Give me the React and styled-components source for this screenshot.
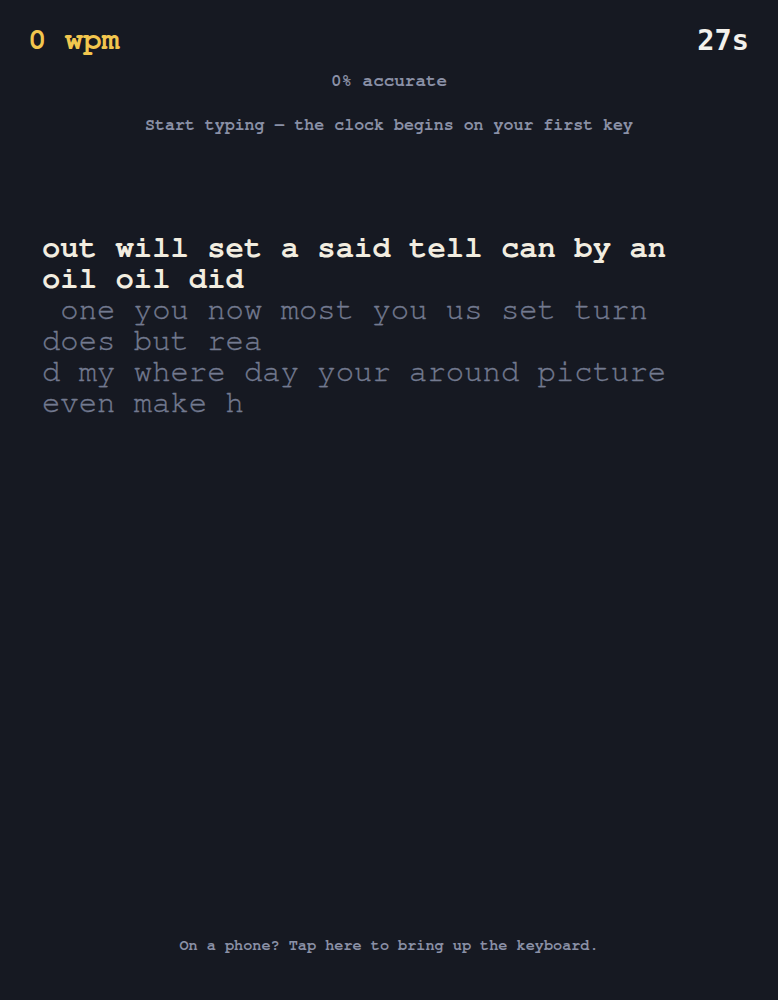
import React from "react";
import styled, { createGlobalStyle } from "styled-components";

const Global = createGlobalStyle`
  html, body { margin: 0; padding: 0; background: #161922; }
  body { font-family: "FreeMono", "Courier New", monospace; }
`;

const Page = styled.div`
  min-height: 100vh;
  box-sizing: border-box;
  display: flex;
  flex-direction: column;
  background: #161922;
  padding: 24px 0 0;
`;

const Header = styled.header`
  display: flex;
  justify-content: space-between;
  align-items: center;
  padding: 0 29px 0 28px;
  height: 32px;
`;

const Wpm = styled.div`
  font-family: "FreeMono", "Courier New", monospace;
  font-weight: 700;
  font-size: 30.6px;
  color: #f2c64e;
  line-height: 1;
`;

const Timer = styled.div`
  font-family: "DejaVu Sans Mono", monospace;
  font-weight: 700;
  font-size: 28.6px;
  color: #f3f1ec;
  line-height: 1;
`;

const Note = styled.div`
  text-align: center;
  font-weight: 700;
  font-size: ${(p) => p.$size}px;
  color: #8a90a6;
  line-height: 1.2;
  margin-top: ${(p) => p.$mt || 0}px;
`;

const Passage = styled.div`
  margin: 97px 0 0 42px;
  width: 694px;
  font-size: 30.6px;
  line-height: 31px;
`;

const Chunk = styled.div`
  white-space: pre-wrap;
  color: ${(p) => (p.$typed ? "#f2ede0" : "#737a90")};
  font-weight: ${(p) => (p.$typed ? 700 : 400)};
  -webkit-text-stroke: ${(p) => (p.$typed ? "0" : "0.3px #737a90")};
`;

const Spacer = styled.div`
  flex: 1;
`;

const Footer = styled.div`
  text-align: center;
  font-weight: 700;
  font-size: 15.2px;
  color: #8a90a6;
  padding-bottom: 47px;
`;

export default function App() {
  return (
    <Page>
      <Global />
      <Header>
        <Wpm>0 wpm</Wpm>
        <Timer>27s</Timer>
      </Header>
      <Note $size={17.6} $mt={15}>0% accurate</Note>
      <Note $size={16.6} $mt={24}>Start typing — the clock begins on your first key</Note>
      <Passage>
        <Chunk $typed>out will set a said tell can by an oil oil did</Chunk>
        <Chunk> one you now most you us set turn does but rea</Chunk>
        <Chunk>d my where day your around picture even make h</Chunk>
      </Passage>
      <Spacer />
      <Footer>On a phone? Tap here to bring up the keyboard.</Footer>
    </Page>
  );
}
